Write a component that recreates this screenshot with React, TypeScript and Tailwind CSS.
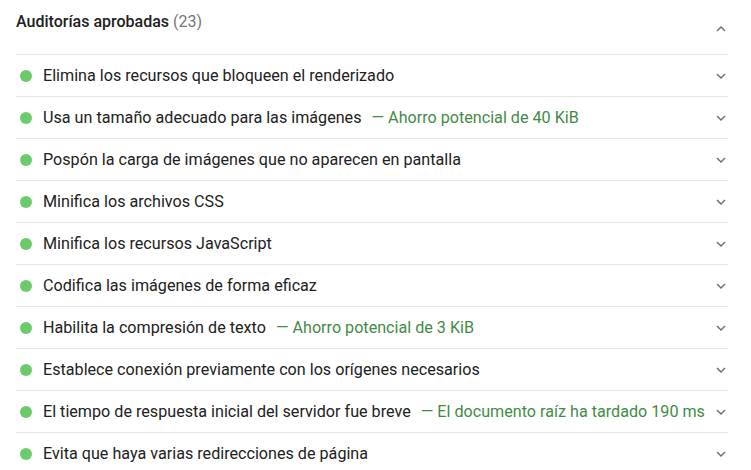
import React from "react";

type Audit = { title: string; note?: string };

const audits: Audit[] = [
  { title: "Elimina los recursos que bloqueen el renderizado" },
  { title: "Usa un tamaño adecuado para las imágenes", note: "Ahorro potencial de 40 KiB" },
  { title: "Pospón la carga de imágenes que no aparecen en pantalla" },
  { title: "Minifica los archivos CSS" },
  { title: "Minifica los recursos JavaScript" },
  { title: "Codifica las imágenes de forma eficaz" },
  { title: "Habilita la compresión de texto", note: "Ahorro potencial de 3 KiB" },
  { title: "Establece conexión previamente con los orígenes necesarios" },
  { title: "El tiempo de respuesta inicial del servidor fue breve", note: "El documento raíz ha tardado 190 ms" },
  { title: "Evita que haya varias redirecciones de página" },
];

function Chevron({ up = false }: { up?: boolean }) {
  return (
    <svg width="10" height="6" viewBox="0 0 10 6" className="shrink-0">
      <path
        d={up ? "M1 5 L5 1 L9 5" : "M1 1 L5 5 L9 1"}
        fill="none"
        stroke="#6b6b6b"
        strokeWidth="1.4"
      />
    </svg>
  );
}

export default function App() {
  return (
    <div
      className="w-[751px] h-[470px] overflow-hidden bg-white pl-4 pr-[23px] text-[#212121]"
      style={{ fontFamily: "Roboto, 'Noto Sans', sans-serif" }}
    >
      <div className="flex h-[55px] items-center justify-between border-b border-[#e6e6e6] pb-[10px]">
        <div className="text-[16px] font-medium leading-none">
          Auditorías aprobadas <span className="font-normal text-[#757575]">(23)</span>
        </div>
        <div className="pr-[2px] pt-[14px]">
          <Chevron up />
        </div>
      </div>
      {audits.map((a) => (
        <div
          key={a.title}
          className="flex h-[42px] items-center border-b border-[#e6e6e6]"
        >
          <span className="ml-[4px] mr-[11px] h-[12px] w-[12px] shrink-0 rounded-full bg-[#6acb6a]" />
          <span className="pt-[2px] text-[16.15px] leading-none">{a.title}</span>
          {a.note && (
            <span className="ml-[10px] pt-[2px] text-[16.15px] leading-none text-[#448b45]">
              — {a.note}
            </span>
          )}
          <span className="ml-auto pr-[2px]">
            <Chevron />
          </span>
        </div>
      ))}
    </div>
  );
}
